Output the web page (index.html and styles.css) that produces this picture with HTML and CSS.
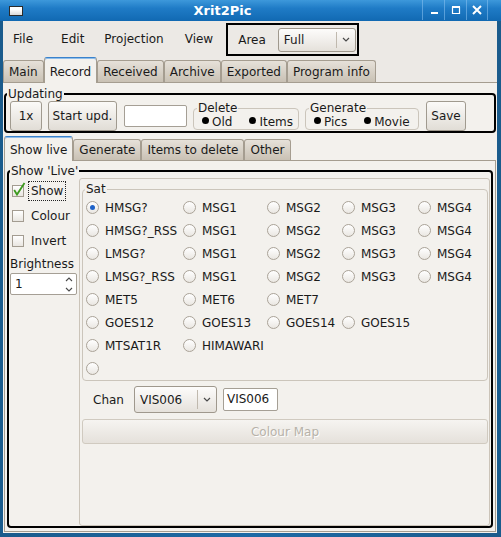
FILE: index.html
```html
<!DOCTYPE html>
<html>
<head>
<meta charset="utf-8">
<title>Xrit2Pic</title>
<link rel="stylesheet" href="styles.css">
</head>
<body>
<div class="window">
  <div class="titlebar">
    <span class="win-icon"></span>
    <span class="title">Xrit2Pic</span>
    <div class="wbtns">
      <span class="wbtn"><svg width="10" height="10" viewBox="0 0 10 10"><rect x="2" y="7" width="7" height="2" fill="#fff"/></svg></span>
      <span class="wbtn"><svg width="10" height="10" viewBox="0 0 10 10"><path d="M1.5 2.5 H8.5 V8.5 H1.5 Z" fill="none" stroke="#fff" stroke-width="1.2"/><rect x="1" y="1" width="8" height="2" fill="#fff"/></svg></span>
      <span class="wbtn"><svg width="10" height="10" viewBox="0 0 10 10"><path d="M1 1 L9 9 M9 1 L1 9" stroke="#fff" stroke-width="2"/></svg></span>
    </div>
  </div>
  <div class="client">
    <div class="menubar">
      <span class="menu-item first">File</span>
      <span class="menu-item">Edit</span>
      <span class="menu-item proj">Projection</span>
      <span class="menu-item last">View</span>
      <div class="area-box">
        <span class="area-label">Area</span>
        <div class="combo area-combo">
          <span class="combo-text">Full</span>
          <span class="combo-sep"></span>
          <span class="chev"><svg width="8" height="5" viewBox="0 0 8 5"><path d="M1 1 L4 4 L7 1" stroke="#4a4a4a" fill="none" stroke-width="1.2"/></svg></span>
        </div>
      </div>
    </div>
    <div class="tabs outer-tabs">
      <span class="tab">Main</span>
      <span class="tab active">Record</span>
      <span class="tab">Received</span>
      <span class="tab">Archive</span>
      <span class="tab">Exported</span>
      <span class="tab">Program info</span>
    </div>
    <div class="outer-panel">
      <fieldset class="frame updating">
        <legend>Updating</legend>
        <div class="upd-row">
          <button class="btn btn-1x">1x</button>
          <button class="btn btn-start">Start upd.</button>
          <div class="entry upd-entry"></div>
          <fieldset class="group grp-delete">
            <legend>Delete</legend>
            <div class="opts">
              <span class="bullet-item"><span class="dot"></span>Old</span>
              <span class="bullet-item"><span class="dot"></span>Items</span>
            </div>
          </fieldset>
          <fieldset class="group grp-generate">
            <legend>Generate</legend>
            <div class="opts">
              <span class="bullet-item"><span class="dot"></span>Pics</span>
              <span class="bullet-item"><span class="dot"></span>Movie</span>
            </div>
          </fieldset>
          <button class="btn btn-save">Save</button>
        </div>
      </fieldset>
      <div class="tabs inner-tabs">
        <span class="tab active">Show live</span>
        <span class="tab">Generate</span>
        <span class="tab">Items to delete</span>
        <span class="tab">Other</span>
      </div>
      <div class="inner-panel">
        <fieldset class="frame live">
          <legend>Show 'Live'</legend>
          <div class="live-body">
            <div class="left-col">
              <div class="check-row">
                <span class="cb"><svg class="check" width="14" height="15" viewBox="0 0 14 15"><path d="M2.2 8 L5 12.5 L12.5 1" stroke="#3c9a1e" stroke-width="1.8" fill="none"/></svg></span>
                <span class="cb-label focus">Show</span>
              </div>
              <div class="check-row">
                <span class="cb"></span>
                <span class="cb-label">Colour</span>
              </div>
              <div class="check-row">
                <span class="cb"></span>
                <span class="cb-label">Invert</span>
              </div>
              <div class="bright-label">Brightness</div>
              <div class="spin">
                <span class="spin-text">1</span>
                <span class="spin-arrows">
                  <svg width="8" height="5" viewBox="0 0 8 5"><path d="M1 4 L4 1 L7 4" stroke="#4a4a4a" fill="none" stroke-width="1.1"/></svg>
                  <svg width="8" height="5" viewBox="0 0 8 5"><path d="M1 1 L4 4 L7 1" stroke="#4a4a4a" fill="none" stroke-width="1.1"/></svg>
                </span>
              </div>
            </div>
            <div class="right-col">
              <fieldset class="group sat">
                <legend>Sat</legend>
                <div class="sat-grid">
                  <span class="radio-item"><span class="radio on"></span>HMSG?</span>
                  <span class="radio-item"><span class="radio"></span>MSG1</span>
                  <span class="radio-item"><span class="radio"></span>MSG2</span>
                  <span class="radio-item"><span class="radio"></span>MSG3</span>
                  <span class="radio-item"><span class="radio"></span>MSG4</span>

                  <span class="radio-item"><span class="radio"></span>HMSG?_RSS</span>
                  <span class="radio-item"><span class="radio"></span>MSG1</span>
                  <span class="radio-item"><span class="radio"></span>MSG2</span>
                  <span class="radio-item"><span class="radio"></span>MSG3</span>
                  <span class="radio-item"><span class="radio"></span>MSG4</span>

                  <span class="radio-item"><span class="radio"></span>LMSG?</span>
                  <span class="radio-item"><span class="radio"></span>MSG1</span>
                  <span class="radio-item"><span class="radio"></span>MSG2</span>
                  <span class="radio-item"><span class="radio"></span>MSG3</span>
                  <span class="radio-item"><span class="radio"></span>MSG4</span>

                  <span class="radio-item"><span class="radio"></span>LMSG?_RSS</span>
                  <span class="radio-item"><span class="radio"></span>MSG1</span>
                  <span class="radio-item"><span class="radio"></span>MSG2</span>
                  <span class="radio-item"><span class="radio"></span>MSG3</span>
                  <span class="radio-item"><span class="radio"></span>MSG4</span>

                  <span class="radio-item"><span class="radio"></span>MET5</span>
                  <span class="radio-item"><span class="radio"></span>MET6</span>
                  <span class="radio-item"><span class="radio"></span>MET7</span>
                  <span class="radio-item row-end"></span>

                  <span class="radio-item"><span class="radio"></span>GOES12</span>
                  <span class="radio-item"><span class="radio"></span>GOES13</span>
                  <span class="radio-item"><span class="radio"></span>GOES14</span>
                  <span class="radio-item"><span class="radio"></span>GOES15</span>
                  <span class="radio-item"></span>

                  <span class="radio-item"><span class="radio"></span>MTSAT1R</span>
                  <span class="radio-item"><span class="radio"></span>HIMAWARI</span>
                  <span class="radio-item row-end"></span>

                  <span class="radio-item"><span class="radio"></span></span>
                </div>
              </fieldset>
              <div class="chan-row">
                <span class="chan-label">Chan</span>
                <div class="combo chan-combo">
                  <span class="combo-text">VIS006</span>
                  <span class="combo-sep"></span>
                  <span class="chev"><svg width="8" height="5" viewBox="0 0 8 5"><path d="M1 1 L4 4 L7 1" stroke="#4a4a4a" fill="none" stroke-width="1.2"/></svg></span>
                </div>
                <div class="entry chan-entry">VIS006</div>
              </div>
              <button class="btn colour-map" disabled>Colour Map</button>
            </div>
          </div>
        </fieldset>
      </div>
    </div>
  </div>
</div>
</body>
</html>
```

FILE: styles.css
```css
* { box-sizing: border-box; }
html, body { margin: 0; padding: 0; }
body {
  width: 501px;
  height: 537px;
  overflow: hidden;
  background: #1b5e92;
  font-family: "DejaVu Sans", "Liberation Sans", sans-serif;
  font-size: 12px;
  color: #1a1a1a;
}
.window {
  width: 501px;
  height: 537px;
  display: flex;
  flex-direction: column;
  background: linear-gradient(90deg, #1a5b8c, #1d6aa6 50%, #1a5b8c);
}

/* title bar */
.titlebar {
  height: 21px;
  flex: none;
  display: flex;
  align-items: center;
  padding: 0 13px 0 9px;
  background: linear-gradient(#3d98db 0%, #1f7bc6 40%, #1169b2 100%);
}
.win-icon {
  width: 14px;
  height: 10px;
  border: 1px solid #2b2b2b;
  background: linear-gradient(#ffffff 0, #ffffff 30%, #d9d9d9 100%);
}
.title {
  flex: 1;
  text-align: center;
  color: #fff;
  font-weight: bold;
  font-size: 13px;
}
.wbtns {
  display: flex;
  align-self: stretch;
}
.wbtn {
  width: 22px;
  height: 20px;
  display: flex;
  align-items: center;
  justify-content: center;
  border-left: 1px solid rgba(140, 195, 240, 0.55);
}
.wbtn:last-child { border-right: 1px solid rgba(140, 195, 240, 0.55); }

/* client area */
.client {
  flex: 1;
  margin: 0 4px 4px 3px;
  background: #ece9e5;
  display: flex;
  flex-direction: column;
}

/* menu bar */
.menubar {
  height: 36px;
  flex: none;
  display: flex;
  align-items: center;
  padding-left: 10px;
}
.menu-item { margin-right: 20px; }
.menu-item.first { margin-right: 28px; }
.menu-item.proj { margin-right: 21px; }
.menu-item.last { margin-right: 13px; }
.area-box {
  height: 33px;
  margin-top: 1px;
  border: 2px solid #000;
  display: flex;
  align-items: center;
  padding: 0 1px 0 10px;
}
.area-label { margin-right: 12px; }

.combo {
  display: flex;
  align-items: center;
  height: 24px;
  border: 1px solid #9f988d;
  border-radius: 3px;
  background: linear-gradient(#fdfcfb, #e5e1db);
  padding-left: 5px;
}
.area-combo { width: 78px; }
.combo-text { flex: 1; }
.combo-sep {
  width: 1px;
  align-self: stretch;
  margin: 3px 0;
  background: #c0b9ae;
}
.chev {
  width: 18px;
  display: flex;
  justify-content: center;
}

/* tabs */
.tabs {
  display: flex;
  align-items: flex-end;
  flex: none;
}
.outer-tabs { height: 25px; }
.inner-tabs { height: 24px; margin-top: 3px; }
.tab {
  border: 1px solid #a59d90;
  border-bottom: none;
  border-radius: 3px 3px 0 0;
  background: linear-gradient(#e6e1d9, #c9c1b4);
  padding: 0 5px;
  line-height: 20px;
  white-space: nowrap;
}
.outer-tabs .tab { height: 22px; padding-top: 1px; }
.inner-tabs .tab { height: 21px; }
.tab.active {
  background: #f3f1ed;
  border-top-color: #3a82cc;
  box-shadow: inset 0 1px 0 #8fbde9;
  position: relative;
  z-index: 1;
  margin-bottom: -1px;
}
.outer-tabs .tab.active { height: 26px; padding-top: 4px; }
.inner-tabs .tab.active { height: 25px; padding-top: 3px; }

/* panels */
.outer-panel {
  flex: 1;
  background: #f3f1ed;
  border-top: 1px solid #a59d90;
  padding: 4px 1px 1px;
  display: flex;
  flex-direction: column;
}
.inner-panel {
  flex: 1;
  background: #f3f1ed;
  border: 1px solid #a59d90;
  padding: 3px 2px;
  display: flex;
  flex-direction: column;
}

/* frames */
fieldset {
  margin: 0;
  padding: 0;
  min-width: 0;
}
legend {
  padding: 0 1px;
  line-height: 14px;
}
.frame {
  border: 2px solid #000;
  border-radius: 4px;
}
.updating { padding: 0 4px; flex: none; }
.updating legend { margin-left: -3px; }
.upd-row {
  display: flex;
  align-items: flex-start;
  height: 30px;
}

.btn {
  height: 30px;
  border: 1px solid #a09a8f;
  border-radius: 3px;
  background: linear-gradient(#fbfaf8, #e1ddd6);
  font: inherit;
  color: inherit;
  padding: 0;
}
.btn-1x { width: 32px; }
.btn-start { width: 69px; margin-left: 6px; }
.btn-save { width: 40px; margin-left: 7px; }

.entry {
  background: #fff;
  border: 1px solid #a59f95;
  border-radius: 2px;
}
.upd-entry { width: 63px; height: 22px; margin: 4px 0 0 7px; }

.group {
  border: 1px solid #cbc5bb;
  border-radius: 4px;
}
.group legend { margin-left: 3px; }
.grp-delete { width: 106px; height: 29px; margin-left: 6px; }
.grp-generate { width: 114px; height: 29px; margin-left: 6px; }
.opts {
  display: flex;
  padding-left: 8px;
  line-height: 14px;
}
.bullet-item {
  display: flex;
  margin-right: 17px;
}
.dot {
  width: 7px;
  height: 7px;
  border-radius: 50%;
  background: #000;
  margin: 2px 3px 0 0;
}

/* show live frame */
.live {
  flex: 1;
  display: flex;
  flex-direction: column;
}
.live legend { margin-left: 1px; }
.live-body {
  flex: 1;
  display: flex;
}
.left-col {
  width: 70px;
  flex: none;
  padding-left: 1px;
  display: flex;
  flex-direction: column;
}
.check-row {
  height: 25px;
  display: flex;
  align-items: center;
}
.cb {
  width: 12px;
  height: 12px;
  flex: none;
  margin-left: 2px;
  border: 1px solid #a39c91;
  background: linear-gradient(#ffffff, #e9e6e1);
  position: relative;
}
.check {
  position: absolute;
  left: -1px;
  top: -4px;
}
.cb-label {
  margin-left: 4px;
  padding: 0 2px;
  border: 1px dotted transparent;
  line-height: 18px;
}
.cb-label.focus { border-color: #222; }
.bright-label {
  margin-top: 4px;
  line-height: 14px;
}
.spin {
  margin-top: 2px;
  width: 67px;
  height: 22px;
  background: #fff;
  border: 1px solid #a59f95;
  border-radius: 2px;
  display: flex;
  align-items: center;
  padding-left: 4px;
}
.spin-text { flex: 1; }
.spin-arrows {
  width: 12px;
  display: flex;
  flex-direction: column;
  align-items: center;
  gap: 5px;
  margin-right: 1px;
}

.right-col {
  flex: 1;
  margin-right: 1px;
  border: 1px solid #cbc4b9;
  border-radius: 3px;
  padding: 3px 1px 0 2px;
  display: flex;
  flex-direction: column;
}
.sat { padding-left: 3px; }
.sat legend { margin-left: -1px; }
.sat-grid {
  display: grid;
  grid-template-columns: 97px 84px 75px 76px 1fr;
  grid-auto-rows: 23px;
  align-items: center;
}
.row-end { grid-column-end: -1; }
.radio-item {
  display: flex;
  align-items: center;
  white-space: nowrap;
}
.radio {
  width: 13px;
  height: 13px;
  flex: none;
  border-radius: 50%;
  border: 1px solid #aaa398;
  background: linear-gradient(#ffffff, #eae7e2);
  margin-right: 6px;
  display: flex;
  align-items: center;
  justify-content: center;
}
.radio.on::after {
  content: "";
  width: 5px;
  height: 5px;
  border-radius: 50%;
  background: #1e62c8;
}

.chan-row {
  display: flex;
  align-items: center;
  margin-top: 5px;
  padding-left: 11px;
}
.chan-label { margin-right: 10px; }
.chan-combo { width: 83px; height: 27px; }
.chan-entry {
  width: 55px;
  height: 23px;
  margin-left: 6px;
  line-height: 21px;
  padding-left: 3px;
}
.colour-map {
  height: 25px;
  margin-top: 6px;
  border-color: #d0cac0;
  background: linear-gradient(#f6f4f1, #e5e1db);
  color: #b7b2a9;
  text-shadow: 1px 1px 0 #ffffff;
}
```
